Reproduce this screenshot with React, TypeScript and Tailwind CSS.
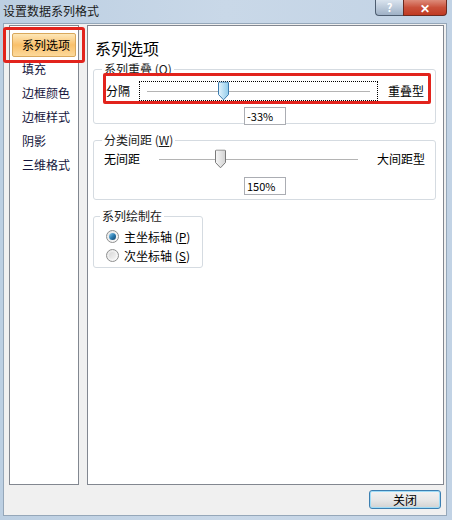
import React from 'react';

const font = { fontFamily: '"Noto Sans CJK SC", "Liberation Sans", sans-serif' };

const navItems = ['系列选项', '填充', '边框颜色', '边框样式', '阴影', '三维格式'];

function Thumb({ blue }: { blue?: boolean }) {
  const id = blue ? 'thumbBlue' : 'thumbGray';
  return (
    <svg width="11" height="19" viewBox="0 0 11 19" className="absolute top-1/2 -translate-y-1/2">
      <defs>
        <linearGradient id={id} x1="0" y1="0" x2="1" y2="0">
          <stop offset="0" stopColor={blue ? '#e6f5fd' : '#f7f7f7'} />
          <stop offset="1" stopColor={blue ? '#8fcbeb' : '#d2d2d2'} />
        </linearGradient>
      </defs>
      <path
        d="M1.5 0.5 H9.5 Q10.5 0.5 10.5 1.5 V13 L5.5 18.3 L0.5 13 V1.5 Q0.5 0.5 1.5 0.5 Z"
        fill={`url(#${id})`}
        stroke={blue ? '#3d7bad' : '#7a7a7a'}
      />
    </svg>
  );
}

function Track({ thumbAt }: { thumbAt: number }) {
  return <div className="h-px bg-[#b4b4b4] border-b border-white box-content" style={{ width: thumbAt }} />;
}

function Radio({ checked }: { checked?: boolean }) {
  return (
    <span className="w-[13px] h-[13px] rounded-full border border-[#8e8f8f] bg-gradient-to-br from-[#e6e6e6] to-[#fbfbfb] flex items-center justify-center">
      {checked ? (
        <span className="w-[7px] h-[7px] rounded-full bg-gradient-to-br from-[#8fd0f2] via-[#2d7fb3] to-[#123f66]" />
      ) : (
        <span className="w-[7px] h-[7px] rounded-full bg-gradient-to-br from-[#d8d8d8] to-[#f4f4f4]" />
      )}
    </span>
  );
}

function ValueBox({ value }: { value: string }) {
  return (
    <div className="ml-[150px] w-[42px] h-[18px] border border-[#abadb3] bg-white pl-[2px] text-[11px] leading-[16px] text-black">
      {value}
    </div>
  );
}

export default function App() {
  return (
    <div className="w-[452px] h-[520px] flex flex-col relative overflow-hidden bg-gradient-to-r from-[#bccfe2] via-[#c9d8e8] to-[#c2d3e5] text-[12px] text-black" style={font}>
      {/* title bar */}
      <div className="h-[23px] flex justify-between items-start shrink-0">
        <div className="pl-[3px] pt-[4px] leading-[14px] text-[12px] text-[#1a1a1a]">设置数据系列格式</div>
        <div className="flex mr-[5px]">
          <div className="w-[28px] h-[16px] rounded-bl-[4px] border border-r-0 border-t-0 border-[#4d5d70] bg-gradient-to-b from-[#d9e3ee] to-[#9fb1c6] flex items-center justify-center text-white text-[11px] font-bold leading-none">
            ?
          </div>
          <div className="w-[44px] h-[16px] rounded-br-[4px] border border-t-0 border-[#6b2a20] bg-gradient-to-b from-[#dd8b7a] via-[#c9503a] to-[#c03a22] flex items-center justify-center text-white text-[12px] font-bold leading-none">
            ✕
          </div>
        </div>
      </div>

      {/* client area */}
      <div className="flex-1 ml-[3px] mr-[5px] mb-[4px] border border-[#95a7b9] bg-[#f0f0f0] flex flex-col">
        <div className="flex pt-[1px]">
          {/* nav list */}
          <div className="ml-[5px] w-[70px] h-[460px] border border-[#828790] bg-white pt-[7px] px-[1px]">
            {navItems.map((item, i) => (
              <div
                key={item}
                className={
                  i === 0
                    ? 'h-[24px] mx-px flex items-center pl-[9px] rounded-[2px] border border-[#d9a85c] bg-gradient-to-b from-[#fde7b8] via-[#f9c06a] to-[#fcd99a] leading-none'
                    : 'h-[24px] mx-px flex items-center pl-[10px] leading-none text-[#14143c]'
                }
              >
                {item}
              </div>
            ))}
          </div>

          {/* options pane */}
          <div className="ml-[8px] w-[357px] h-[460px] border border-[#828790] bg-white flex flex-col">
            <div className="pl-[7px] pt-[12px] text-[16px] leading-[20px]">系列选项</div>

            <fieldset className="mt-[4px] ml-[5px] mr-[7px] h-[62px] border border-[#d5dbe1] rounded-[3px] pl-[12px]">
              <legend className="ml-[-4px] px-[2px] leading-[14px] text-[#1a1a1a]">
                系列重叠 (<u>O</u>)
              </legend>
              <div className="mt-[5px] h-[20px] flex items-center">
                <span className="w-[24px]">分隔</span>
                <div className="ml-[9px] w-[239px] h-[20px] border border-dotted border-black relative flex items-center pl-[7px]">
                  <div className="h-px w-[223px] bg-[#b4b4b4] shadow-[0_1px_0_#ffffff]" />
                  <div className="absolute left-[78px] top-0 h-full">
                    <Thumb blue />
                  </div>
                </div>
                <span className="ml-[10px]">重叠型</span>
              </div>
              <div className="mt-[6px] -ml-[12px]">
                <ValueBox value="-33%" />
              </div>
            </fieldset>

            <fieldset className="mt-[9px] ml-[5px] mr-[7px] h-[67px] border border-[#d5dbe1] rounded-[3px] pl-[10px]">
              <legend className="ml-[-2px] px-[2px] leading-[14px] text-[#1a1a1a]">
                分类间距 (<u>W</u>)
              </legend>
              <div className="mt-[2px] h-[20px] flex items-center">
                <span className="w-[36px]">无间距</span>
                <div className="ml-[19px] w-[199px] h-[20px] relative flex items-center">
                  <div className="h-px w-[199px] bg-[#b4b4b4] shadow-[0_1px_0_#ffffff]" />
                  <div className="absolute left-[56px] top-0 h-full">
                    <Thumb />
                  </div>
                </div>
                <span className="ml-[19px]">大间距型</span>
              </div>
              <div className="mt-[8px] -ml-[10px]">
                <ValueBox value="150%" />
              </div>
            </fieldset>

            <fieldset className="mt-[9px] ml-[5px] w-[110px] h-[59px] border border-[#d5dbe1] rounded-[3px] pl-[12px] pt-[4px]">
              <legend className="ml-[-6px] px-[2px] leading-[14px] text-[#1a1a1a]">系列绘制在</legend>
              <div className="h-[19px] flex items-center gap-[4px]">
                <Radio checked />
                <span className="ml-[1px]">
                  主坐标轴 (<u>P</u>)
                </span>
              </div>
              <div className="h-[19px] flex items-center gap-[4px]">
                <Radio />
                <span className="ml-[1px]">
                  次坐标轴 (<u>S</u>)
                </span>
              </div>
            </fieldset>
          </div>
        </div>

        {/* footer */}
        <div className="flex justify-end pt-[5px] pr-[5px]">
          <button className="w-[72px] h-[19px] rounded-[3px] border border-[#3c7fb1] shadow-[inset_0_0_0_1px_#9fdcf7] bg-gradient-to-b from-[#f2f2f2] via-[#e8e8e8] to-[#d2d2d2] text-[12px] leading-none flex items-center justify-center">
            关闭
          </button>
        </div>
      </div>

      {/* red annotations */}
      <div className="absolute left-[3px] top-[27px] w-[82px] h-[36px] border-[3px] border-[#e2231c] rounded-[3px]" />
      <div className="absolute left-[103px] top-[73px] w-[328px] h-[31px] border-[3px] border-[#e2231c] rounded-[2px]" />
    </div>
  );
}
